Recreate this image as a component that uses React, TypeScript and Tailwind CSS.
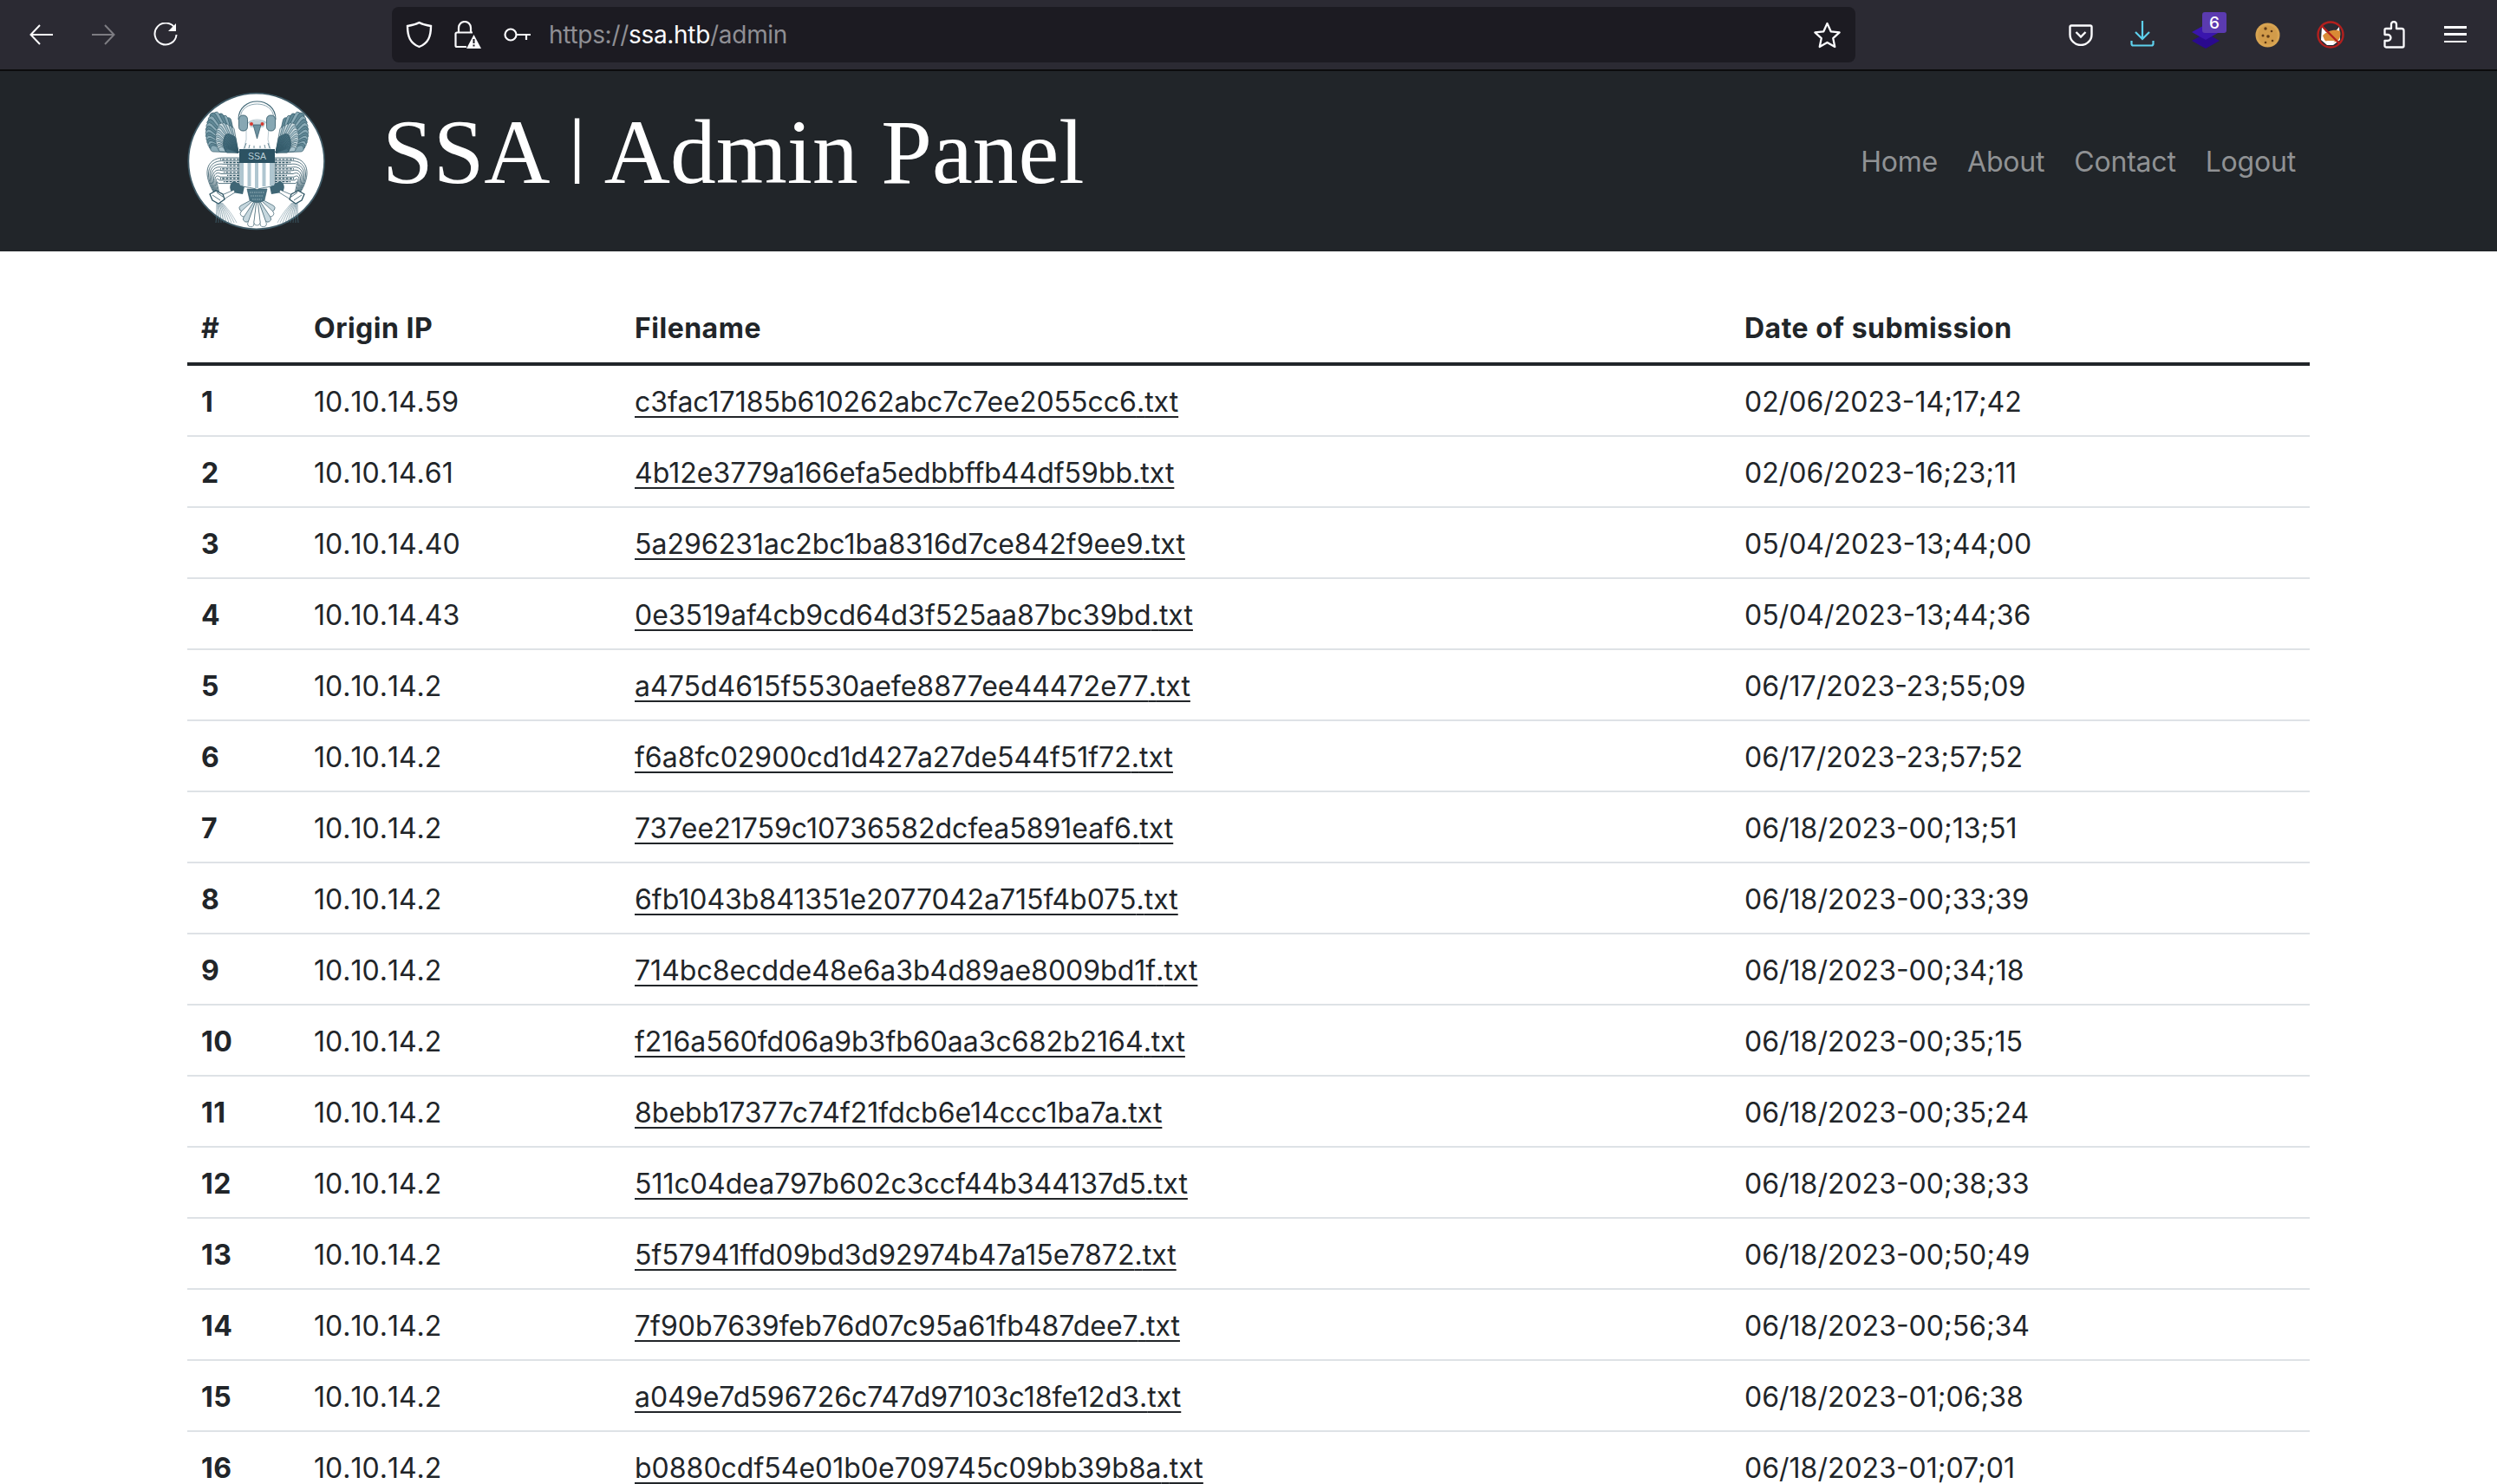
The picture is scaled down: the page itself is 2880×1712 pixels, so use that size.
const rows = [
  ["1", "10.10.14.59", "c3fac17185b610262abc7c7ee2055cc6.txt", "02/06/2023-14;17;42"],
  ["2", "10.10.14.61", "4b12e3779a166efa5edbbffb44df59bb.txt", "02/06/2023-16;23;11"],
  ["3", "10.10.14.40", "5a296231ac2bc1ba8316d7ce842f9ee9.txt", "05/04/2023-13;44;00"],
  ["4", "10.10.14.43", "0e3519af4cb9cd64d3f525aa87bc39bd.txt", "05/04/2023-13;44;36"],
  ["5", "10.10.14.2", "a475d4615f5530aefe8877ee44472e77.txt", "06/17/2023-23;55;09"],
  ["6", "10.10.14.2", "f6a8fc02900cd1d427a27de544f51f72.txt", "06/17/2023-23;57;52"],
  ["7", "10.10.14.2", "737ee21759c10736582dcfea5891eaf6.txt", "06/18/2023-00;13;51"],
  ["8", "10.10.14.2", "6fb1043b841351e2077042a715f4b075.txt", "06/18/2023-00;33;39"],
  ["9", "10.10.14.2", "714bc8ecdde48e6a3b4d89ae8009bd1f.txt", "06/18/2023-00;34;18"],
  ["10", "10.10.14.2", "f216a560fd06a9b3fb60aa3c682b2164.txt", "06/18/2023-00;35;15"],
  ["11", "10.10.14.2", "8bebb17377c74f21fdcb6e14ccc1ba7a.txt", "06/18/2023-00;35;24"],
  ["12", "10.10.14.2", "511c04dea797b602c3ccf44b344137d5.txt", "06/18/2023-00;38;33"],
  ["13", "10.10.14.2", "5f57941ffd09bd3d92974b47a15e7872.txt", "06/18/2023-00;50;49"],
  ["14", "10.10.14.2", "7f90b7639feb76d07c95a61fb487dee7.txt", "06/18/2023-00;56;34"],
  ["15", "10.10.14.2", "a049e7d596726c747d97103c18fe12d3.txt", "06/18/2023-01;06;38"],
  ["16", "10.10.14.2", "b0880cdf54e01b0e709745c09bb39b8a.txt", "06/18/2023-01;07;01"],
];

// the font in the shot has a wider period than the installed Inter
function Dotted({ text }: { text: string }) {
  const parts = text.split(".");
  return (
    <>
      {parts.map((p, i) => (
        <span key={i}>
          {p}
          {i < parts.length - 1 && <span className="tracking-[0.01px]">.</span>}
        </span>
      ))}
    </>
  );
}

function Feather({ x, y, angle, length, width, fill }: { x: number; y: number; angle: number; length: number; width: number; fill: string }) {
  return (
    <path
      d={`M0 0 L${length - width} ${-width} Q${length} ${-width} ${length} 0 Q${length} ${width} ${length - width} ${width} Z`}
      transform={`translate(${x} ${y}) rotate(${angle})`}
      fill={fill}
      stroke="#2f5564"
      strokeWidth="0.6"
    />
  );
}

const wingAngles = Array.from({ length: 16 }, (_, i) => -108 - i * 4.2);

function wingLength(a: number) {
  return a > -123 ? 42 + ((-108 - a) / 15) * 14 : 56 - ((-123 - a) / 47) * 23;
}

function HalfEagle() {
  const cables = [0, 1, 2, 3, 4, 5, 6, 7, 8];
  const tassels = [0, 1, 2, 3, 4, 5, 6, 7, 8];
  return (
    <g>
      {/* wing, long feathers then coverts */}
      {wingAngles.map((a, i) => (
        <Feather key={i} x={85} y={85} angle={a} length={wingLength(a)} width={3.6} fill={i % 2 ? "#8aabb7" : "#5f8795"} />
      ))}
      {wingAngles.map((a, i) => (
        <Feather key={i} x={85} y={85} angle={a + 2} length={wingLength(a) * 0.72} width={2.8} fill={i % 2 ? "#a9c3cd" : "#cfdee3"} />
      ))}
      {wingAngles.map((a, i) => (
        <Feather key={i} x={85} y={85} angle={a} length={wingLength(a) * 0.46} width={2.2} fill="#4a7282" />
      ))}
      {/* cables off the shield */}
      {cables.map((i) => (
        <path
          key={i}
          d={`M87 ${91 + i * 3.7} L${70 - i} ${91 + i * 3.7} C${50 + i} ${90 + i * 3} ${42 + i * 2.5} ${106 + i * 2.5} ${56 + i * 0.8} 130`}
          stroke="#2f5564"
          strokeWidth="0.8"
          fill="none"
        />
      ))}
      {cables.slice(0, 8).map((i) => (
        <path key={i} d={`M86 ${92.8 + i * 3.7} H${64 + (i % 3) * 4}`} stroke="#2f5564" strokeWidth="1.3" strokeDasharray="3 1.2" />
      ))}
      {/* thigh and leg */}
      <path d="M80 118 C74 120 74 128 78 131 L90 133 L92 124 Z" fill="#3f6675" />
      <path d="M66 134 L80 128 L81 131 L68 139 Z" fill="#fff" stroke="#2f5564" strokeWidth="0.7" />
      {/* talon */}
      <path d="M52 133 L59 129 L67 133 L69 139 L62 144 L55 140 Z" fill="#fff" stroke="#2f5564" strokeWidth="1.3" />
      <path d="M55 134 L64 140 M60 131 L67 136" stroke="#2f5564" strokeWidth="0.8" />
      {/* cable tails, thinning toward the foot of the seal */}
      {tassels.map((i) => (
        <path
          key={i}
          d={`M${60 + i * 0.8} 143 C${60 + i * 1.6} 150 ${60 + i * 2.2} 156 ${59 + i * 3} 166`}
          stroke="#4a7282"
          strokeWidth="0.8"
          fill="none"
          opacity={0.85 - i * 0.04}
        />
      ))}
      {/* tail */}
      {[0, 1, 2, 3].map((i) => (
        <Feather key={i} x={106.5} y={136} angle={142 - i * 13} length={25 + i * 3.5} width={3.6} fill={i % 2 ? "#fff" : "#c6d7de"} />
      ))}
    </g>
  );
}

function Seal() {
  return (
    <svg width="160" height="160" viewBox="26 15 160 160" className="shrink-0">
      <circle cx="105.7" cy="95" r="78.4" fill="#fff" stroke="#3f5a66" strokeWidth="1.8" />
      <HalfEagle />
      <g transform="translate(213 0) scale(-1 1)">
        <HalfEagle />
      </g>
      <Feather x={106.5} y={136} angle={90} length={33} width={3.6} fill="#fff" />
      <path d="M95 127 H118 L115 140 Q106.500 145 98 140 Z" fill="#4a7282" stroke="#2f5564" strokeWidth="0.6" />
      <path d="M98 131 H115 M99 135 H114 M101 139 H112" stroke="#cfdee3" strokeWidth="0.6" strokeDasharray="1.500 1" />
      {/* head */}
      <path d="M94 56 C94 44 119 44 120 56 L119 70 L122 81 L91 81 L94 70 Z" fill="#fff" stroke="#8ca6b1" strokeWidth="0.6" />
      <path d="M94 74 L92 80 M98 76 L97 80 M103 77 V80 M110 77 V80 M115 76 L116 80 M119 74 L121 80" stroke="#4a7282" strokeWidth="0.8" />
      <path d="M85 47 C85 19 128 19 128 47" fill="none" stroke="#3f6675" strokeWidth="1.1" />
      <path d="M87.500 44 C88 24 125 24 125.500 44" fill="none" stroke="#7f9ca8" strokeWidth="0.9" />
      <rect x="85.500" y="42" width="10" height="18" rx="4.500" fill="#87a7b3" stroke="#2f5564" strokeWidth="0.8" />
      <rect x="117.500" y="42" width="10" height="18" rx="4.500" fill="#87a7b3" stroke="#2f5564" strokeWidth="0.8" />
      <path d="M96 50 C100 47 113 47 117 50 L114 56 L99 56 Z" fill="#9db6c0" opacity="0.6" />
      <path d="M102 53 L111 53 L106.5 69 Z" fill="#6c909e" stroke="#2f5564" strokeWidth="0.7" />
      <circle cx="100" cy="52" r="2" fill="#d83a30" />
      <circle cx="112.500" cy="52" r="2" fill="#d83a30" />
      {/* shield */}
      <path d="M86 96 H127 V121 C127 125 112 125 106.5 127.500 C101 125 86 125 86 121 Z" fill="#fff" stroke="#3f6675" strokeWidth="0.8" />
      <rect x="87" y="96" width="4" height="27" fill="#afc6d0" />
      <rect x="95.500" y="96" width="4" height="28" fill="#afc6d0" />
      <rect x="104" y="96" width="4" height="30" fill="#afc6d0" />
      <rect x="112.500" y="96" width="4" height="28" fill="#afc6d0" />
      <rect x="121" y="96" width="5" height="27" fill="#afc6d0" />
      <rect x="86" y="81" width="41" height="16" fill="#2c5262" />
      <text x="106.5" y="93" textAnchor="middle" fontSize="10.500" fill="#bcd0d8" className="font-['Liberation_Sans',sans-serif]">
        SSA
      </text>
    </svg>
  );
}

function BrowserIcons() {
  return (
    <div className="flex items-center pl-[34px] h-full">
      <svg width="28" height="24" viewBox="0 0 28 24" fill="none" stroke="#fbfbfe" strokeWidth="2">
        <path d="M27 12H2M12 1L1.5 12 12 23" />
      </svg>
      <svg className="ml-[43px]" width="28" height="24" viewBox="0 0 28 24" fill="none" stroke="#7d7c82" strokeWidth="2">
        <path d="M1 12h25M16 1l10.5 11L16 23" />
      </svg>
      <svg className="ml-[43px]" width="30" height="28" viewBox="0 0 30 28" fill="none" stroke="#fbfbfe" strokeWidth="2">
        <path d="M26 7A12.5 12.5 0 1 0 27.5 14" />
        <path d="M27 1v9h-9" fill="#fbfbfe" stroke="none" />
      </svg>
    </div>
  );
}

function UrlBar() {
  return (
    <div className="absolute left-[452px] top-2 flex h-16 w-[1688px] items-center rounded-lg bg-[#1c1b22]">
      <svg className="ml-4" width="31" height="32" viewBox="0 0 31 32" fill="none" stroke="#fbfbfe" strokeWidth="2.4">
        <path d="M15.5 2 C11 4.500 6 5.500 2 6 C2 18 5 26 15.5 30 C26 26 29 18 29 6 C25 5.500 20 4.500 15.500 2 Z" />
      </svg>
      <svg className="ml-[25px]" width="31" height="32" viewBox="0 0 31 32" fill="none" stroke="#fbfbfe" strokeWidth="2.2">
        <path d="M5 13V8a7 7 0 0 1 14 0v5" />
        <path d="M14 30H3a1.500 1.500 0 0 1-1.500-1.500V15A1.500 1.500 0 0 1 3 13.500h18" />
        <path d="M22.500 16L31 32H14Z" fill="#fbfbfe" stroke="none" />
        <path d="M22.500 21v5M22.500 27.500v2" stroke="#1c1b22" strokeWidth="2" />
      </svg>
      <svg className="ml-[26px]" width="32" height="16" viewBox="0 0 32 16" fill="none" stroke="#fbfbfe" strokeWidth="2.2">
        <circle cx="8" cy="8" r="6.500" />
        <path d="M15 8h16M26 8v6" />
      </svg>
      <span className="ml-[20px] font-['Inter',sans-serif] text-[28px] leading-none tracking-[-0.3px] text-[#8f8f94]">
        https://<span className="text-[#fbfbfe]">ssa.htb</span>/admin
      </span>
      <svg className="ml-auto mr-[16px]" width="33" height="31" viewBox="0 0 24 23" fill="none" stroke="#fbfbfe" strokeWidth="1.700" strokeLinejoin="round">
        <path d="M12 1.500l3.100 6.900 7.400.8-5.500 5 1.500 7.300L12 17.800l-6.500 3.700 1.500-7.300-5.500-5 7.400-.8z" />
      </svg>
    </div>
  );
}

function Extensions() {
  return (
    <div className="absolute left-[2386px] top-0 h-20 w-[460px]">
      <svg className="absolute left-0 top-[28px]" width="28" height="25" viewBox="0 0 28 25" fill="none" stroke="#fbfbfe" strokeWidth="2.400">
        <path d="M3 1.500h22A1.500 1.500 0 0 1 26.500 3v9a12.500 12 0 0 1-25 0V3A1.500 1.500 0 0 1 3 1.500Z" />
        <path d="M8.500 9l5.500 5.500L19.500 9" />
      </svg>
      <svg className="absolute left-[71px] top-[24px]" width="28" height="30" viewBox="0 0 28 30" fill="none" stroke="#5ed0ec" strokeWidth="2.200">
        <path d="M14 0v21M6 13l8 8 8-8" />
        <path d="M1.500 23v3.500a2 2 0 0 0 2 2h21a2 2 0 0 0 2-2V23" />
      </svg>
      <svg className="absolute left-[142px] top-[28px]" width="32" height="28" viewBox="0 0 32 28">
        <path d="M16 10l16 9-16 9-16-9z" fill="#2a0a8e" />
        <path d="M16 0l16 9-16 9-16-9z" fill="#3a15ad" />
      </svg>
      <span className="absolute left-[154px] top-[14px] flex h-6 w-7 items-center justify-center rounded-[3px] bg-[#5b3bb0] font-['Inter',sans-serif] text-[19px] font-medium leading-none text-white">
        6
      </span>
      <svg className="absolute left-[215px] top-[26px]" width="29" height="29" viewBox="0 0 29 29">
        <circle cx="14.500" cy="14.500" r="14" fill="#d8a452" />
        <circle cx="14.500" cy="14.500" r="11" fill="#c98f3e" opacity="0.4" />
        <circle cx="12" cy="7" r="1.700" fill="#5f3a17" />
        <circle cx="19" cy="10" r="1.300" fill="#5f3a17" />
        <circle cx="9" cy="15" r="1.500" fill="#5f3a17" />
        <circle cx="15" cy="16" r="1.800" fill="#5f3a17" />
        <circle cx="20" cy="21" r="1.300" fill="#5f3a17" />
        <circle cx="12" cy="23" r="1.300" fill="#5f3a17" />
      </svg>
      <svg className="absolute left-[286px] top-[24px]" width="32" height="32" viewBox="0 0 32 32">
        <path d="M6 7l5 6 10 0 5-6 1 15-8 6H12l-7-6z" fill="#fff" />
        <path d="M7 17c4-5 14-8 20-5 1 4 0 9-4 12-5 1-12 1-14-2z" fill="#d98a35" />
        <path d="M11 23h10l-3 3h-5z" fill="#fff" />
        <circle cx="16" cy="16" r="14.500" fill="none" stroke="#b3201e" strokeWidth="2.400" />
        <path d="M6 6l20 20" stroke="#b3201e" strokeWidth="2.400" />
      </svg>
      <svg className="absolute left-[362px] top-[24px]" width="26" height="32" viewBox="0 0 26 32" fill="none" stroke="#fbfbfe" strokeWidth="2.300" strokeLinejoin="round">
        <path d="M10 9V4a3 3 0 0 1 6 0v5h6a2.500 2.500 0 0 1 2.500 2.500V29a1.500 1.500 0 0 1-1.500 1.500H4A1.500 1.500 0 0 1 2.500 29v-6H6a3.500 3.500 0 0 0 0-7H2.500v-5.500A1.500 1.500 0 0 1 4 9z" />
      </svg>
      <div className="absolute left-[433px] top-[30px] flex h-[19px] w-[26px] flex-col justify-between">
        <span className="h-[2.500px] bg-[#fbfbfe]" />
        <span className="h-[2.500px] bg-[#fbfbfe]" />
        <span className="h-[2.500px] bg-[#fbfbfe]" />
      </div>
    </div>
  );
}

export default function App() {
  return (
    <div className="h-[1712px] w-[2880px] overflow-hidden bg-white font-['Inter',sans-serif] text-[#212529]">
      <div className="relative h-20 bg-[#2b2a33]">
        <BrowserIcons />
        <UrlBar />
        <Extensions />
      </div>
      <div className="h-0.5 bg-[#0c0c0d]" />
      <header className="flex h-[208px] items-center bg-[#212529] pl-[216px] pr-[216px]">
        <Seal />
        <h1 className="ml-[65px] -mt-[20px] font-['Liberation_Serif',serif] text-[105.5px] font-normal leading-none text-white">
          SSA <span className="inline-block origin-[50%_12%] scale-y-[0.78]">|</span> Admin Panel
        </h1>
        <nav className="ml-auto mt-[2px] flex items-center gap-[34px] pr-4 text-[32px] tracking-[-0.2px] text-[#909294]">
          <a>Home</a>
          <a>About</a>
          <a>Contact</a>
          <a>Logout</a>
        </nav>
      </header>
      <div className="px-[216px] pt-12">
        <table className="w-full table-fixed border-separate border-spacing-0 text-left text-[32px] leading-[48px]">
          <colgroup>
            <col className="w-[130px]" />
            <col className="w-[370px]" />
            <col className="w-[1280px]" />
            <col />
          </colgroup>
          <thead>
            <tr>
              {["#", "Origin IP", "Filename", "Date of submission"].map((h) => (
                <th key={h} className="h-[84px] border-b-4 border-[#212529] px-4 pt-[2px] font-bold tracking-[0.5px]">
                  {h}
                </th>
              ))}
            </tr>
          </thead>
          <tbody>
            {rows.map(([n, ip, file, date]) => (
              <tr key={n}>
                <th className="h-[82px] border-b-2 border-[#dee2e6] px-4 pt-[3px] font-bold tracking-[0.5px]">{n}</th>
                <td className="h-[82px] border-b-2 border-[#dee2e6] px-4 pt-[3px]">
                  <Dotted text={ip} />
                </td>
                <td className="h-[82px] border-b-2 border-[#dee2e6] px-4 pt-[3px]">
                  <a className="underline decoration-2 underline-offset-[5px]">
                    <Dotted text={file} />
                  </a>
                </td>
                <td className="h-[82px] border-b-2 border-[#dee2e6] px-4 pt-[3px]">{date}</td>
              </tr>
            ))}
          </tbody>
        </table>
      </div>
    </div>
  );
}
